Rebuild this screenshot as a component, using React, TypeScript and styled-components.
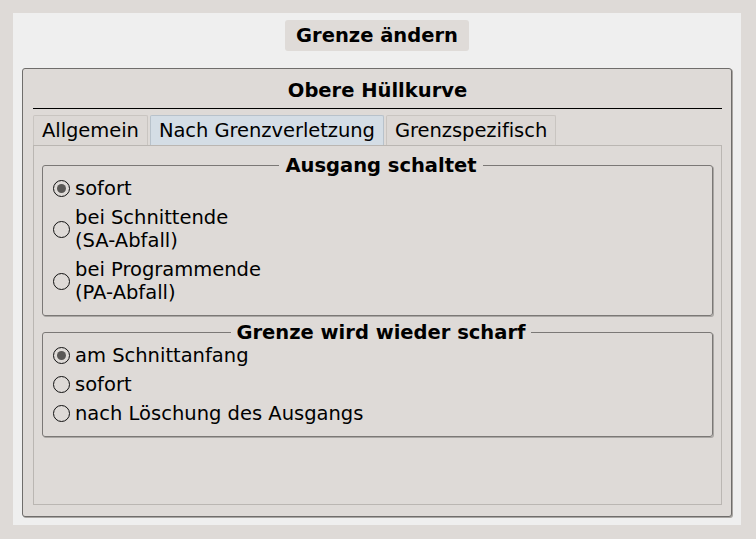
import styled, { createGlobalStyle } from 'styled-components';

const GlobalStyle = createGlobalStyle`
  body {
    margin: 0;
    background: #dedad7;
    font-family: 'DejaVu Sans', 'Liberation Sans', sans-serif;
    font-size: 19.5px;
    color: #000;
  }
`;

const tabs = ['Allgemein', 'Nach Grenzverletzung', 'Grenzspezifisch'];

const outputOptions = [
  { label: ['sofort'], checked: true },
  { label: ['bei Schnittende', '(SA-Abfall)'], checked: false },
  { label: ['bei Programmende', '(PA-Abfall)'], checked: false },
];

const rearmOptions = [
  { label: ['am Schnittanfang'], checked: true },
  { label: ['sofort'], checked: false },
  { label: ['nach Löschung des Ausgangs'], checked: false },
];

type Option = { label: string[]; checked: boolean };

const RadioGroup = ({ title, options }: { title: string; options: Option[] }) => (
  <Group>
    <Legend>{title}</Legend>
    <OptionList>
      {options.map((o) => (
        <RadioRow key={o.label.join()}>
          <RadioCircle checked={o.checked} />
          <RadioLabel>
            {o.label.map((line) => (
              <span key={line}>{line}</span>
            ))}
          </RadioLabel>
        </RadioRow>
      ))}
    </OptionList>
  </Group>
);

const App = () => {
  return (
    <>
      <GlobalStyle />
      <Window>
        <TitleButton>Grenze ändern</TitleButton>
        <MainBox>
          <BoxTitle>Obere Hüllkurve</BoxTitle>
          <TabBar>
            {tabs.map((t, i) => (
              <Tab key={t} active={i === 1}>
                {t}
              </Tab>
            ))}
          </TabBar>
          <TabPane>
            <RadioGroup title="Ausgang schaltet" options={outputOptions} />
            <RadioGroup title="Grenze wird wieder scharf" options={rearmOptions} />
          </TabPane>
        </MainBox>
      </Window>
    </>
  );
};

export default App;

const Window = styled.div`
  margin: 13px;
  width: 728px;
  height: 512px;
  background: #efefef;
  box-sizing: border-box;
  padding: 7px 9px 8px 9px;
  display: flex;
  flex-direction: column;
  align-items: center;
`;

const TitleButton = styled.div`
  height: 31px;
  line-height: 31px;
  padding: 0 11px;
  background: #dfdbd8;
  border-radius: 3px;
  font-weight: bold;
`;

const MainBox = styled.section`
  margin-top: 17px;
  align-self: stretch;
  flex: 1;
  box-sizing: border-box;
  background: #dedad7;
  border: 1px solid #6f6d6b;
  border-radius: 3px;
  box-shadow: 1px 1px 0 #a9a6a3;
  padding: 0 9px 11px 10px;
  display: flex;
  flex-direction: column;
`;

const BoxTitle = styled.div`
  text-align: center;
  font-weight: bold;
  line-height: 23px;
  padding: 10px 0 6px;
  border-bottom: 1px solid #000;
`;

const TabBar = styled.div`
  margin-top: 6px;
  display: flex;
  gap: 2px;
`;

const Tab = styled.div<{ active: boolean }>`
  height: 30px;
  line-height: 30px;
  box-sizing: border-box;
  padding: 0 8px 0 8px;
  letter-spacing: -0.05px;
  background: ${({ active }) => (active ? '#d4dde5' : '#dcd8d5')};
  border: 1px solid ${({ active }) => (active ? '#b8c2cb' : '#c9c5c1')};
  border-bottom: none;
  border-radius: 2px 2px 0 0;
`;

const TabPane = styled.div`
  flex: 1;
  border: 1px solid #bab6b2;
  padding: 8px 8px 0 8px;
  display: flex;
  flex-direction: column;
  gap: 5px;
`;

/* legend sits a little right of centre in the original, hence the uneven padding */
const Group = styled.fieldset`
  margin: 0;
  padding: 0 10px 11px 17px;
  min-inline-size: 0;
  border: 1px solid #7b7876;
  border-radius: 3px;
  box-shadow: 1px 1px 0 #aaa7a4;
`;

const Legend = styled.legend`
  margin: 0 auto;
  padding: 0 6px;
  font-weight: bold;
  line-height: 23px;
`;

const OptionList = styled.div`
  margin-left: -7px;
  display: flex;
  flex-direction: column;
  gap: 6px;
`;

const RadioRow = styled.div`
  display: flex;
  align-items: center;
  gap: 5px;
`;

const RadioCircle = styled.span<{ checked: boolean }>`
  width: 17px;
  height: 17px;
  box-sizing: border-box;
  border: 1.5px solid #111;
  border-radius: 50%;
  display: flex;
  align-items: center;
  justify-content: center;
  flex-shrink: 0;
  &::after {
    content: '';
    width: 9px;
    height: 9px;
    border-radius: 50%;
    background: ${({ checked }) => (checked ? '#5a5856' : 'transparent')};
  }
`;

const RadioLabel = styled.div`
  display: flex;
  flex-direction: column;
  line-height: 23px;
`;
